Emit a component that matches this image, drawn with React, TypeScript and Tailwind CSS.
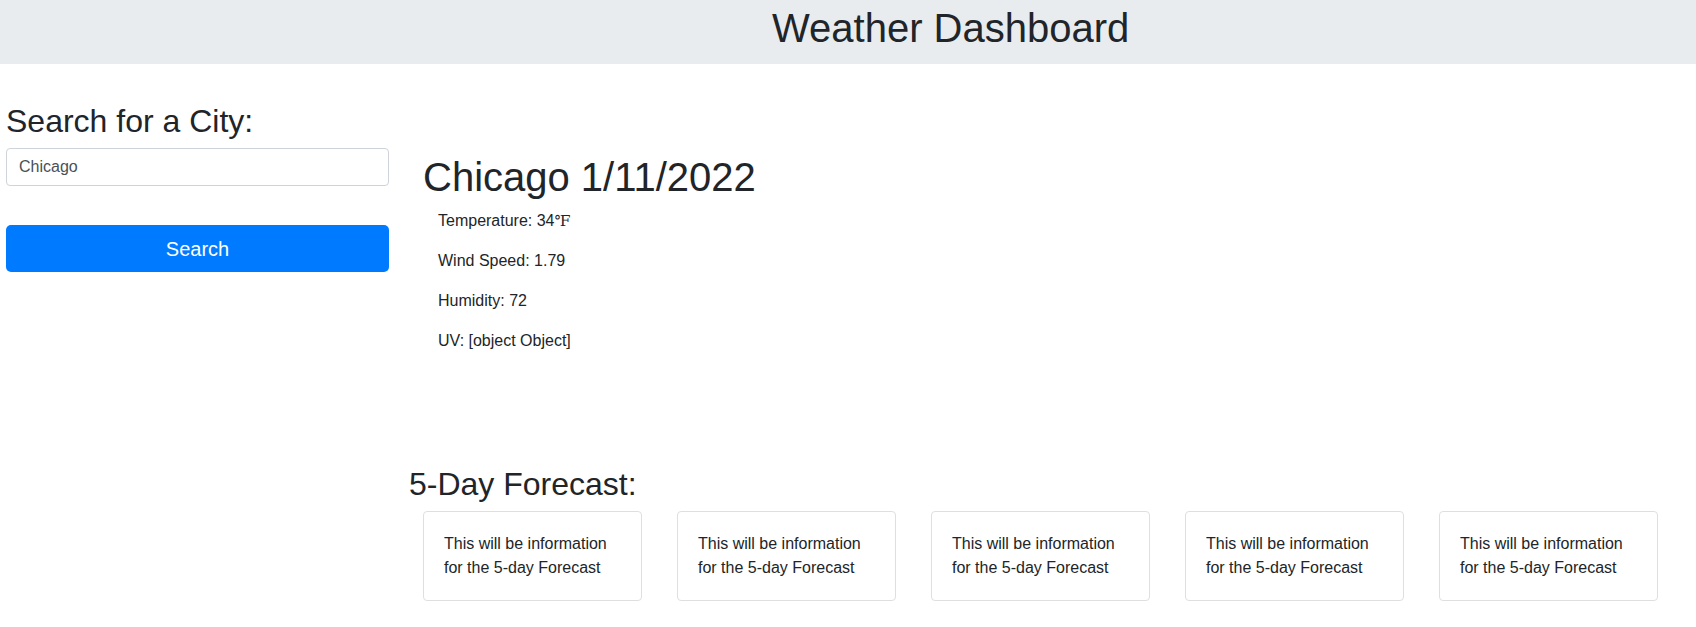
import React from "react";

const font = { fontFamily: '"Liberation Sans", Arial, sans-serif' };

export default function App() {
  const cards = [0, 1, 2, 3, 4];
  return (
    <div className="w-[1696px] min-h-[627px] bg-white text-[#212529] font-['Liberation_Sans',Arial,sans-serif]" style={font}>
      <header className="h-[64px] bg-[#e9ecef] pt-[4px] pl-[772px]">
        <h1 className="text-[40px] leading-[1.2] font-normal">Weather Dashboard</h1>
      </header>
      <main className="flex">
        <section className="w-[407px] pl-[6px] pt-[38px] shrink-0">
          <h2 className="text-[32px] leading-[1.2] font-normal mb-2">Search for a City:</h2>
          <input
            className="block w-[383px] h-[38px] border border-[#ced4da] rounded-[4px] px-3 text-[16px] text-[#495057] outline-none"
            defaultValue="Chicago"
          />
          <button className="mt-[39px] block w-[383px] h-[47px] bg-[#007bff] text-white text-[20px] rounded-[5px]">
            Search
          </button>
        </section>
        <section className="flex flex-col pt-[89px]">
          <div className="pl-[16px]">
            <h1 className="text-[40px] leading-[1.2] font-normal mb-2">Chicago 1/11/2022</h1>
            <div className="pl-[15px] text-[16px] leading-6">
              <p className="mb-4">
                Temperature: 34<span className="font-['DejaVu_Serif',serif] text-[15px]">℉</span>
              </p>
              <p className="mb-4">Wind Speed: 1.79</p>
              <p className="mb-4">Humidity: 72</p>
              <p className="mb-4">UV: [object Object]</p>
            </div>
          </div>
          <h2 className="mt-[96px] pl-[2px] text-[32px] leading-[1.2] font-normal mb-[8px]">5-Day Forecast:</h2>
          <div className="flex gap-[35px] pl-[16px]">
            {cards.map((i) => (
              <div
                key={i}
                className="w-[219px] border border-[#dfdfdf] rounded-[4px] p-5 text-[16px] leading-6"
              >
                This will be information for the 5-day Forecast
              </div>
            ))}
          </div>
        </section>
      </main>
    </div>
  );
}
